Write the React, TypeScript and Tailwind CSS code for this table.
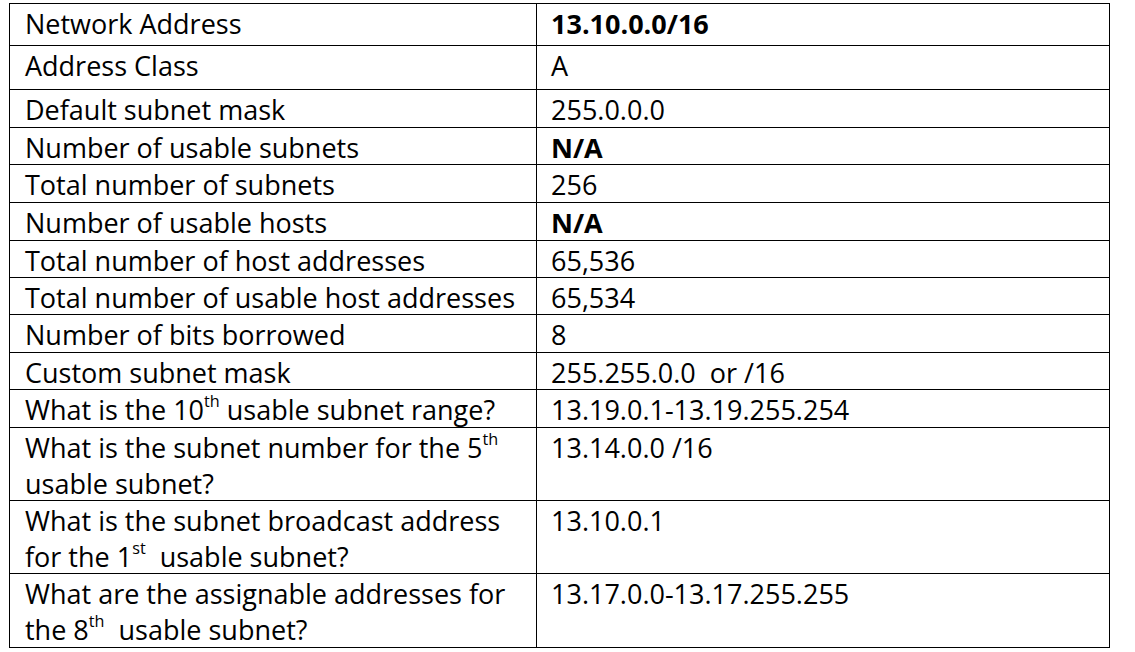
import React from 'react';

type Row = { label: React.ReactNode; value: React.ReactNode; h: string; bold?: boolean };

const Th = ({ children }: { children: React.ReactNode }) => (
  <sup className="text-[0.6em] relative -top-[0.2em] align-super leading-none">{children}</sup>
);

const rows: Row[] = [
  { label: 'Network Address', value: '13.10.0.0/16', h: 'h-[42px]', bold: true },
  { label: 'Address Class', value: 'A', h: 'h-[44px]' },
  { label: 'Default subnet mask', value: '255.0.0.0', h: 'h-[38px]' },
  { label: 'Number of usable subnets', value: 'N/A', h: 'h-[37px]', bold: true },
  { label: 'Total number of subnets', value: '256', h: 'h-[38px]' },
  { label: 'Number of usable hosts', value: 'N/A', h: 'h-[38px]', bold: true },
  { label: 'Total number of host addresses', value: '65,536', h: 'h-[37px]' },
  { label: 'Total number of usable host addresses', value: '65,534', h: 'h-[37px]' },
  { label: 'Number of bits borrowed', value: '8', h: 'h-[38px]' },
  { label: 'Custom subnet mask', value: '255.255.0.0  or /16', h: 'h-[37px]' },
  {
    label: (
      <>
        What is the 10<Th>th</Th> usable subnet range?
      </>
    ),
    value: '13.19.0.1-13.19.255.254',
    h: 'h-[38px]',
  },
  {
    label: (
      <>
        What is the subnet number for the 5<Th>th</Th>
        <br />
        usable subnet?
      </>
    ),
    value: '13.14.0.0 /16',
    h: 'h-[73px]',
  },
  {
    label: (
      <>
        What is the subnet broadcast address
        <br />
        for the 1<Th>st</Th>  usable subnet?
      </>
    ),
    value: '13.10.0.1',
    h: 'h-[73px]',
  },
  {
    label: (
      <>
        What are the assignable addresses for
        <br />
        the 8<Th>th</Th>  usable subnet?
      </>
    ),
    value: '13.17.0.0-13.17.255.255',
    h: 'h-[74px]',
  },
];

export default function App() {
  return (
    <div
      className="min-h-screen bg-white pt-[3px] pl-[9px] text-black text-[27px] leading-[36px]"
      style={{ fontFamily: '"Open Sans", "Noto Sans", sans-serif' }}
    >
      <div className="w-[1101px] border-t border-l border-r border-black">
        {rows.map((r, i) => (
          <div key={i} className={`flex border-b border-black ${r.h}`}>
            <div className="w-[527px] shrink-0 border-r border-black pl-[15px] pt-[2px] whitespace-pre-wrap">
              {r.label}
            </div>
            <div className={`flex-1 pl-[14px] pt-[2px] whitespace-pre-wrap ${r.bold ? 'font-bold' : ''}`}>
              {r.value}
            </div>
          </div>
        ))}
      </div>
    </div>
  );
}
